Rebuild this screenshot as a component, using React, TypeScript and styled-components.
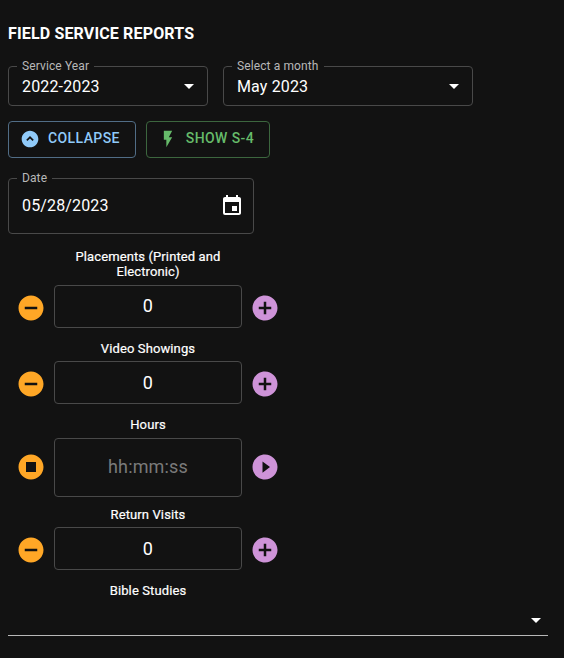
import React from "react";
import styled, { createGlobalStyle } from "styled-components";
import {
  MdAddCircle,
  MdArrowDropDown,
  MdEvent,
  MdExpandCircleDown,
  MdFlashOn,
  MdPlayCircleFilled,
  MdRemoveCircle,
  MdStopCircle,
} from "react-icons/md";

const GlobalStyle = createGlobalStyle`
  *, *::before, *::after { box-sizing: border-box; }
  body {
    margin: 0;
    background: #121212;
    color: #fff;
    font-family: Roboto, "Liberation Sans", sans-serif;
    -webkit-font-smoothing: antialiased;
  }
`;

const Page = styled.main`
  display: flex;
  flex-direction: column;
  height: 658px;
  padding: 22px 16px 0 8px;
  overflow: hidden;
`;

const Title = styled.h1`
  margin: 0;
  font-size: 16px;
  font-weight: 700;
  line-height: 24px;
  letter-spacing: 0.15px;
  text-transform: uppercase;
`;

const Filters = styled.div`
  display: flex;
  gap: 15px;
  margin-top: 20px;
`;

const Field = styled.div<{ $width: number; $height: number }>`
  position: relative;
  display: flex;
  align-items: center;
  justify-content: space-between;
  width: ${(p) => p.$width}px;
  height: ${(p) => p.$height}px;
  padding: 0 6px 0 13px;
  border: 1px solid #494949;
  border-radius: 4px;
  font-size: 16px;
  line-height: 23px;
  letter-spacing: 0.15px;

  svg {
    width: 24px;
    height: 24px;
  }
`;

const DateField = styled(Field)`
  margin-top: 20px;
  padding-right: 9px;
`;

const FieldLabel = styled.label`
  position: absolute;
  top: -10px;
  left: 8px;
  padding: 0 5px;
  background: #121212;
  color: #b8b8b8;
  font-size: 12px;
  line-height: 18px;
  letter-spacing: 0.11px;
`;

const FieldValue = styled.span`
  padding-top: 1px;
`;

const DateValue = styled.span`
  line-height: 24px;
  padding-bottom: 1px;
`;

const Actions = styled.div`
  display: flex;
  gap: 10px;
  margin-top: 15px;
`;

const OutlinedButton = styled.button<{ $color: string; $border: string }>`
  display: inline-flex;
  align-items: center;
  height: 37px;
  padding: 0 15px 0 11px;
  border: 1px solid ${(p) => p.$border};
  border-radius: 4px;
  background: transparent;
  color: ${(p) => p.$color};
  font: 500 14px/24.5px Roboto, "Liberation Sans", sans-serif;
  letter-spacing: 0.4px;
  text-transform: uppercase;

  svg {
    width: 20px;
    height: 20px;
    margin: 0 8px 1px 0;
  }
`;

const ButtonText = styled.span`
  padding-bottom: 2px;
`;

const CollapseIcon = styled(MdExpandCircleDown)`
  transform: rotate(180deg);
`;

const Counters = styled.section`
  display: flex;
  flex-direction: column;
  width: 280px;
  margin-top: 15px;
`;

const CounterLabel = styled.div`
  width: 188px;
  margin-left: 46px;
  padding: 0 10px;
  font-size: 13px;
  font-weight: 400;
  line-height: 15px;
  letter-spacing: 0.11px;
  text-align: center;
  -webkit-text-stroke: 0.2px currentColor;
`;

const CounterRow = styled.div<{ $gap: number; $after: number }>`
  display: flex;
  align-items: center;
  gap: 8px;
  margin: ${(p) => p.$gap}px 0 ${(p) => p.$after}px 8px;
`;

const CounterInput = styled.input<{ $height: number; $lift: number }>`
  width: 188px;
  height: ${(p) => p.$height}px;
  padding: 0 0 ${(p) => p.$lift}px;
  border: 1px solid #494949;
  border-radius: 4px;
  outline: none;
  background: transparent;
  color: #fff;
  font: 400 18px/25px Roboto, "Liberation Sans", sans-serif;
  letter-spacing: 0.15px;
  text-align: center;

  &::placeholder {
    color: #7a7a7a;
    opacity: 1;
  }
`;

const RoundButton = styled.button<{ $color: string; $timer: boolean }>`
  display: flex;
  width: 30px;
  height: 30px;
  padding: 0;
  margin: ${(p) => (p.$timer ? "0 0 1px" : "2px 0 0")};
  border: 0;
  background: transparent;
  color: ${(p) => p.$color};

  svg {
    width: 30px;
    height: 30px;
  }
`;

const StudiesSelect = styled.div`
  display: flex;
  align-items: center;
  justify-content: flex-end;
  height: 32px;
  margin-top: 6px;
  border-bottom: 1px solid #b8b8b8;

  svg {
    width: 24px;
    height: 24px;
  }
`;

interface CounterProps {
  label: string;
  value?: string;
  timer?: boolean;
  gap: number;
  after: number;
  lift?: number;
}

function Counter({ label, value = "", timer = false, gap, after, lift = 1 }: CounterProps) {
  return (
    <>
      <CounterLabel>{label}</CounterLabel>
      <CounterRow $gap={gap} $after={after}>
        <RoundButton $color="#ffa726" $timer={timer} aria-label={timer ? "Stop" : "Decrease"}>
          {timer ? <MdStopCircle /> : <MdRemoveCircle />}
        </RoundButton>
        <CounterInput
          $height={timer ? 59 : 43}
          $lift={lift}
          defaultValue={value}
          placeholder={timer ? "hh:mm:ss" : undefined}
          aria-label={label}
        />
        <RoundButton $color="#ce93d8" $timer={timer} aria-label={timer ? "Start" : "Increase"}>
          {timer ? <MdPlayCircleFilled /> : <MdAddCircle />}
        </RoundButton>
      </CounterRow>
    </>
  );
}

export default function App() {
  return (
    <>
      <GlobalStyle />
      <Page>
        <Title>Field Service Reports</Title>
        <Filters>
          <Field $width={200} $height={40}>
            <FieldLabel>Service Year</FieldLabel>
            <FieldValue>2022-2023</FieldValue>
            <MdArrowDropDown />
          </Field>
          <Field $width={250} $height={40}>
            <FieldLabel>Select a month</FieldLabel>
            <FieldValue>May 2023</FieldValue>
            <MdArrowDropDown />
          </Field>
        </Filters>
        <Actions>
          <OutlinedButton $color="#90caf9" $border="#516d86">
            <CollapseIcon />
            <ButtonText>Collapse</ButtonText>
          </OutlinedButton>
          <OutlinedButton $color="#66bb6a" $border="#3c663e">
            <MdFlashOn />
            <ButtonText>Show S-4</ButtonText>
          </OutlinedButton>
        </Actions>
        <DateField $width={246} $height={56}>
          <FieldLabel>Date</FieldLabel>
          <DateValue>05/28/2023</DateValue>
          <MdEvent />
        </DateField>
        <Counters>
          <Counter label="Placements (Printed and Electronic)" value="0" gap={6} after={13} lift={3} />
          <Counter label="Video Showings" value="0" gap={5} after={13} />
          <Counter label="Hours" timer gap={6} after={10} lift={3} />
          <Counter label="Return Visits" value="0" gap={5} after={13} />
          <CounterLabel>Bible Studies</CounterLabel>
        </Counters>
        <StudiesSelect>
          <MdArrowDropDown />
        </StudiesSelect>
      </Page>
    </>
  );
}
